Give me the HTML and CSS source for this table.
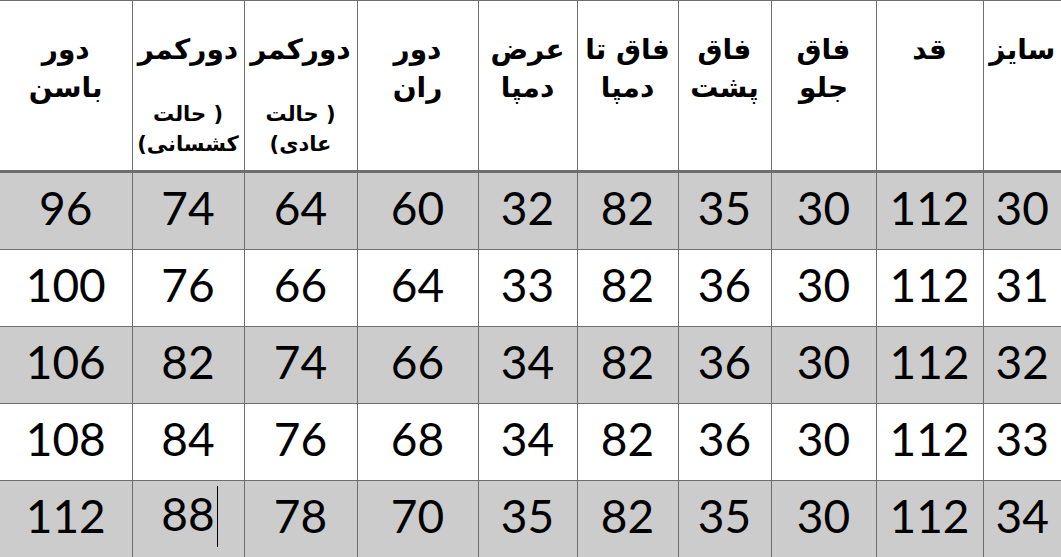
FILE: index.html
```html
<!DOCTYPE html>
<html lang="fa" dir="rtl">
<head>
<meta charset="utf-8">
<title>جدول سایز</title>
<link rel="stylesheet" href="styles.css">
</head>
<body>
<table class="sizes">
  <colgroup>
    <col class="w-size"><col class="w-qad"><col class="w-front"><col class="w-back"><col class="w-inseam">
    <col class="w-hem"><col class="w-thigh"><col class="w-waist"><col class="w-waist2"><col class="w-hip">
  </colgroup>
  <thead>
    <tr>
      <th>سایز</th>
      <th>قد</th>
      <th>فاق<br>جلو</th>
      <th>فاق<br>پشت</th>
      <th>فاق تا<br>دمپا</th>
      <th>عرض<br>دمپا</th>
      <th>دور<br>ران</th>
      <th>دورکمر<span class="sub">( حالت<br>عادی)</span></th>
      <th>دورکمر<span class="sub">( حالت<br>کشسانی)</span></th>
      <th>دور<br>باسن</th>
    </tr>
  </thead>
  <tbody>
    <tr class="shade"><td>30</td><td>112</td><td>30</td><td>35</td><td>82</td><td>32</td><td>60</td><td>64</td><td>74</td><td>96</td></tr>
    <tr><td>31</td><td>112</td><td>30</td><td>36</td><td>82</td><td>33</td><td>64</td><td>66</td><td>76</td><td>100</td></tr>
    <tr class="shade"><td>32</td><td>112</td><td>30</td><td>36</td><td>82</td><td>34</td><td>66</td><td>74</td><td>82</td><td>106</td></tr>
    <tr><td>33</td><td>112</td><td>30</td><td>36</td><td>82</td><td>34</td><td>68</td><td>76</td><td>84</td><td>108</td></tr>
    <tr class="shade"><td>34</td><td>112</td><td>30</td><td>35</td><td>82</td><td>35</td><td>70</td><td>78</td><td><span class="caret"></span>88</td><td>112</td></tr>
  </tbody>
</table>
</body>
</html>
```

FILE: styles.css
```css
html, body {
  margin: 0;
  padding: 0;
  background: #ffffff;
}

body {
  width: 1061px;
  height: 557px;
  overflow: hidden;
}

.sizes {
  width: 1061px;
  table-layout: fixed;
  border-collapse: collapse;
  direction: rtl;
}

.w-size { width: 78px; }
.w-qad { width: 107px; }
.w-front { width: 105px; }
.w-back { width: 93px; }
.w-inseam { width: 101px; }
.w-hem { width: 99px; }
.w-thigh { width: 121px; }
.w-waist { width: 113px; }
.w-waist2 { width: 112px; }
.w-hip { width: 132px; }

.sizes th,
.sizes td {
  border: 1px solid #6e6e6e;
  padding: 0;
  text-align: center;
}

.sizes tr > :first-child { border-right: none; }
.sizes tr > :last-child { border-left: none; }

.sizes th {
  height: 139px;
  vertical-align: top;
  padding-top: 30px;
  font-family: "DejaVu Sans", sans-serif;
  font-weight: bold;
  font-size: 28px;
  line-height: 38px;
  color: #000;
  border-bottom: 3px solid #6e6e6e;
}

.sizes th .sub {
  display: block;
  margin-top: 30px;
  font-size: 21px;
  line-height: 30px;
}

.sizes td {
  height: 70px;
  font-family: Lato, "Open Sans", sans-serif;
  font-size: 46px;
  line-height: 1;
  color: #000;
  padding-bottom: 6px;
}

.sizes tr.shade td {
  background: #cccccc;
}

.caret {
  display: inline-block;
  width: 1px;
  height: 61px;
  margin-right: -3px;
  margin-left: 2px;
  background: #000;
  vertical-align: -16px;
}
```
